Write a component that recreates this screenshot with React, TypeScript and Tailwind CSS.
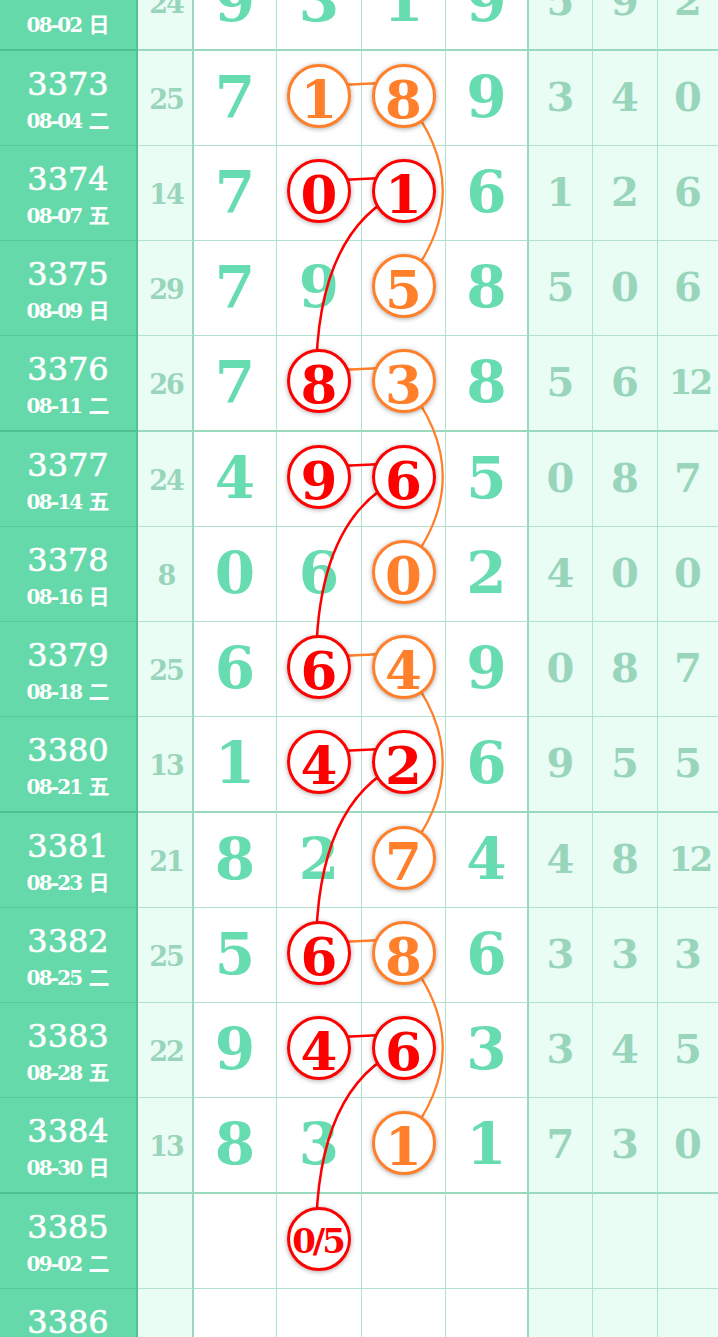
import React from "react";

type C = "r" | "o" | undefined;
interface Row {
  p: string;
  d: string;
  wk: string;
  s: string;
  m: string[];
  x: string[];
  c: [C, C];
}

const rows: Row[] = [
  { p: "3372", d: "08-02", wk: "日", s: "24", m: ["9", "3", "1", "9"], x: ["5", "9", "2"], c: [undefined, undefined] },
  { p: "3373", d: "08-04", wk: "二", s: "25", m: ["7", "1", "8", "9"], x: ["3", "4", "0"], c: ["o", "o"] },
  { p: "3374", d: "08-07", wk: "五", s: "14", m: ["7", "0", "1", "6"], x: ["1", "2", "6"], c: ["r", "r"] },
  { p: "3375", d: "08-09", wk: "日", s: "29", m: ["7", "9", "5", "8"], x: ["5", "0", "6"], c: [undefined, "o"] },
  { p: "3376", d: "08-11", wk: "二", s: "26", m: ["7", "8", "3", "8"], x: ["5", "6", "12"], c: ["r", "o"] },
  { p: "3377", d: "08-14", wk: "五", s: "24", m: ["4", "9", "6", "5"], x: ["0", "8", "7"], c: ["r", "r"] },
  { p: "3378", d: "08-16", wk: "日", s: "8", m: ["0", "6", "0", "2"], x: ["4", "0", "0"], c: [undefined, "o"] },
  { p: "3379", d: "08-18", wk: "二", s: "25", m: ["6", "6", "4", "9"], x: ["0", "8", "7"], c: ["r", "o"] },
  { p: "3380", d: "08-21", wk: "五", s: "13", m: ["1", "4", "2", "6"], x: ["9", "5", "5"], c: ["r", "r"] },
  { p: "3381", d: "08-23", wk: "日", s: "21", m: ["8", "2", "7", "4"], x: ["4", "8", "12"], c: [undefined, "o"] },
  { p: "3382", d: "08-25", wk: "二", s: "25", m: ["5", "6", "8", "6"], x: ["3", "3", "3"], c: ["r", "o"] },
  { p: "3383", d: "08-28", wk: "五", s: "22", m: ["9", "4", "6", "3"], x: ["3", "4", "5"], c: ["r", "r"] },
  { p: "3384", d: "08-30", wk: "日", s: "13", m: ["8", "3", "1", "1"], x: ["7", "3", "0"], c: [undefined, "o"] },
  { p: "3385", d: "09-02", wk: "二", s: "", m: ["", "0/5", "", ""], x: ["", "", ""], c: ["r", undefined] },
  { p: "3386", d: "09-05", wk: "五", s: "", m: ["", "", "", ""], x: ["", "", ""], c: [undefined, undefined] },
];

const isEnd = (i: number) => i % 4 === 0 && i <= 12;
const heights = rows.map((_, i) => (isEnd(i) ? 96 : 95));
const tops: number[] = [];
heights.reduce((acc, h, i) => {
  tops[i] = acc;
  return acc + h;
}, 0);
const total = heights.reduce((a, b) => a + b, 0);
const cy = (i: number) => tops[i] + 45;

const X3 = 319;
const X4 = 403.5;
const RED = "#ff0000";
const ORANGE = "#ff7f2a";

const serif = "font-['DejaVu_Serif','Noto_Sans_CJK_SC',serif]";

function Circle({ color, text }: { color: "r" | "o"; text: string }) {
  const small = text.length > 1;
  const base =
    "relative z-20 w-[64px] h-[64px] rounded-full bg-white border-[3px] flex items-center justify-center shadow-[0_1px_5px_rgba(0,0,0,0.35)] font-bold leading-none " +
    serif;
  const col = color === "r" ? "border-[#ff0000] text-[#ff0000]" : "border-[#ff7f2a] text-[#ff7f2a]";
  return (
    <div className={`${base} ${col}`}>
      {small ? (
        <span className="text-[34px] tracking-[-3px] pt-[4px] pr-[3px]">{text}</span>
      ) : (
        <span className="text-[53px] pt-[7px]">{text}</span>
      )}
    </div>
  );
}

function RowView({ r, i }: { r: Row; i: number }) {
  const end = isEnd(i);
  const hb = end ? "h-[96px] border-b-2 border-b-[#9bd9be]" : "h-[95px] border-b border-b-[#b0e2cc]";
  const hbLeft = end ? "h-[96px] border-b-2 border-b-[#4fc093]" : "h-[95px] border-b border-b-[#58c99c]";
  const mainW = [
    "w-[83px] border-r border-r-[#b0e2cc]",
    "w-[85px] border-r border-r-[#b0e2cc]",
    "w-[84px] border-r border-r-[#b0e2cc]",
    "w-[83px] border-r-2 border-r-[#9bd9be]",
  ];
  const rightW = ["w-[64px] border-r border-r-[#b0e2cc]", "w-[65px] border-r border-r-[#b0e2cc]", "flex-1"];
  return (
    <div className="flex w-[718px]">
      <div className={`w-[138px] shrink-0 flex flex-col items-center pt-[16px] bg-[#66d9aa] text-white border-r-2 border-r-[#50c396] ${hbLeft}`}>
        <div className={`text-[32px] leading-[34px] [-webkit-text-stroke:0.6px_white] ${serif}`}>{r.p}</div>
        <div className="mt-[5px] leading-[26px] flex items-baseline font-bold">
          <span className={`text-[20px] tracking-[-1.8px] ${serif}`}>{r.d}</span>
          <span className="ml-[7px] text-[21px] font-['Noto_Sans_CJK_SC',sans-serif]">{r.wk}</span>
        </div>
      </div>
      <div className={`w-[56px] shrink-0 flex items-center justify-center pt-[2px] bg-[#e9fdf4] border-r-2 border-r-[#9bd9be] ${hb}`}>
        <span className={`text-[27px] font-bold tracking-[-2px] mr-[-2px] text-[#98d5ba] leading-none ${serif}`}>{r.s}</span>
      </div>
      {r.m.map((v, k) => {
        const circ = k === 1 ? r.c[0] : k === 2 ? r.c[1] : undefined;
        return (
          <div key={k} className={`shrink-0 flex items-center justify-center bg-white ${mainW[k]} ${hb} ${circ ? "pb-[4px]" : "pb-[3px]"}`}>
            {circ ? (
              <Circle color={circ} text={v} />
            ) : (
              <span className={`text-[58px] font-bold leading-none text-[#66dcb0] ${serif}`}>{v}</span>
            )}
          </div>
        );
      })}
      {r.x.map((v, k) => (
        <div key={k} className={`shrink-0 flex items-center justify-center pb-[2px] bg-[#e9fdf4] ${rightW[k]} ${hb}`}>
          {v.length > 1 ? (
            <span className={`text-[34px] tracking-[-3px] mr-[-3px] font-bold leading-none text-[#98d5ba] ${serif}`}>{v}</span>
          ) : (
            <span className={`text-[40px] font-bold leading-none text-[#98d5ba] ${serif}`}>{v}</span>
          )}
        </div>
      ))}
    </div>
  );
}

export default function App() {
  const connectors: [number, string][] = [
    [1, ORANGE],
    [2, RED],
    [4, ORANGE],
    [5, RED],
    [7, ORANGE],
    [8, RED],
    [10, ORANGE],
    [11, RED],
  ];
  const redCurves = [2, 5, 8, 11];
  const orangeArcs = [1, 4, 7, 10];
  return (
    <div className="w-[718px] h-[1337px] overflow-hidden bg-white">
      <div className="relative -mt-[45px]">
        {rows.map((r, i) => (
          <RowView key={r.p} r={r} i={i} />
        ))}
        <svg
          className="absolute left-0 top-0 pointer-events-none z-10"
          width={718}
          height={total}
          viewBox={`0 0 718 ${total}`}
          fill="none"
        >
          {orangeArcs.map((i) => {
            const a = cy(i);
            const b = cy(i + 2);
            return (
              <path key={"o" + i} d={`M ${X4} ${a} Q 482 ${(a + b) / 2} ${X4} ${b}`} stroke={ORANGE} strokeWidth={2.2} />
            );
          })}
          {redCurves.map((i) => {
            const a = cy(i);
            const b = cy(i + 2);
            return (
              <path key={"r" + i} d={`M ${X4} ${a} Q 316 ${a + 38} 316 ${b}`} stroke={RED} strokeWidth={2.5} />
            );
          })}
          {connectors.map(([i, c]) => {
            const y = cy(i);
            return (
              <path key={"c" + i} d={`M ${X3} ${y - 10} L ${X4} ${y - 14}`} stroke={c} strokeWidth={2.4} />
            );
          })}
        </svg>
      </div>
    </div>
  );
}
